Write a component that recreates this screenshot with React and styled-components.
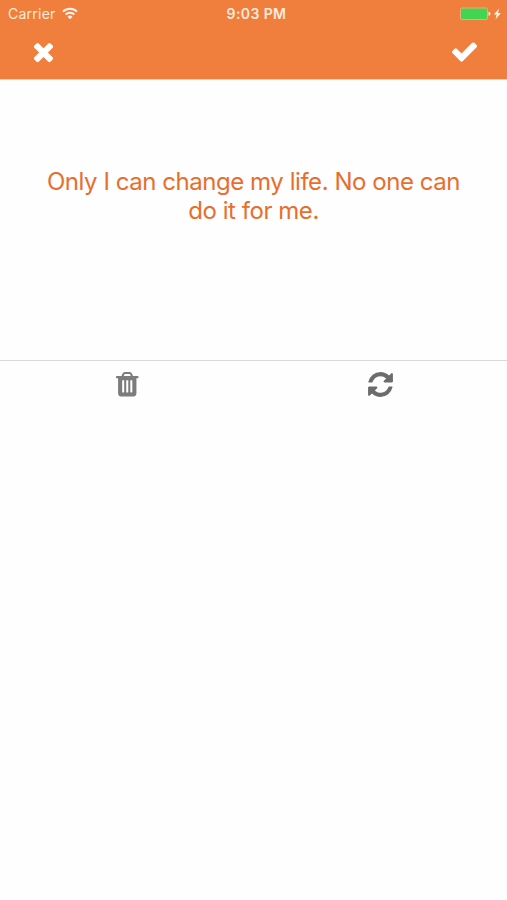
import React from 'react';
import styled, { createGlobalStyle } from 'styled-components';

const GlobalStyle = createGlobalStyle`
    body{
        margin: 0;
        background: #fefefe;
        font-family: Inter, "Liberation Sans", sans-serif;
    }
`;

const Screen = styled.div`
    width: 100%;
    min-height: 900px;
    background: #fefefe;
`;

const Header = styled.header`
    height: 80px;
    background: #f07e3c;
    color: #fff;
    border-bottom: 1px solid #f9cdb1;
    box-sizing: border-box;
`;

const StatusBar = styled.div`
    height: 28px;
    display: grid;
    grid-template-columns: 1fr auto 1fr;
    align-items: center;
    padding: 0 5px 0 8px;
    color: #ffeadb;
    font-size: 14px;
    line-height: 28px;
`;

const Carrier = styled.div`
    display: flex;
    align-items: center;
    gap: 6px;
    letter-spacing: 0.25px;
`;

const Time = styled.div`
    padding-left: 3px;
    font-size: 14px;
    font-weight: 600;
    letter-spacing: 0.4px;
`;

const Power = styled.div`
    display: flex;
    align-items: center;
    justify-content: flex-end;
`;

const NavBar = styled.nav`
    display: flex;
    justify-content: space-between;
    padding: 8.5px 28.5px 0 29px;
`;

const IconButton = styled.button`
    display: flex;
    padding: 0;
    border: 0;
    background: none;
    color: ${({ color }) => color || '#fff'};
`;

const Icon = styled.svg`
    display: block;
    width: ${({ $size }) => $size}px;
    height: ${({ $size }) => $size}px;
    fill: currentColor;
`;

const Quote = styled.div`
    height: 280px;
    display: flex;
    align-items: center;
    justify-content: center;
    box-sizing: border-box;
    padding: 0 40px 48px;
    color: #e96d2b;
    font-size: 24px;
    line-height: 29px;
    letter-spacing: -0.45px;
    text-align: center;
`;

const Actions = styled.div`
    display: grid;
    grid-template-columns: 1fr 1fr;
    justify-items: center;
    align-items: center;
    height: 47px;
    box-sizing: border-box;
    border-top: 1px solid #dadada;
`;

const icons = {
    times: 'M1490 1322q0 40-28 68l-136 136q-28 28-68 28t-68-28l-294-294-294 294q-28 28-68 28t-68-28l-136-136q-28-28-28-68t28-68l294-294-294-294q-28-28-28-68t28-68l136-136q28-28 68-28t68 28l294 294 294-294q28-28 68-28t68 28l136 136q28 28 28 68t-28 68l-294 294 294 294q28 28 28 68z',
    check: 'M1671 566q0 40-28 68l-724 724-136 136q-28 28-68 28t-68-28l-136-136-362-362q-28-28-28-68t28-68l136-136q28-28 68-28t68 28l294 295 656-657q28-28 68-28t68 28l136 136q28 28 28 68z',
    trash: 'M704 1376v-704q0-14-9-23t-23-9h-64q-14 0-23 9t-9 23v704q0 14 9 23t23 9h64q14 0 23-9t9-23zm256 0v-704q0-14-9-23t-23-9h-64q-14 0-23 9t-9 23v704q0 14 9 23t23 9h64q14 0 23-9t9-23zm256 0v-704q0-14-9-23t-23-9h-64q-14 0-23 9t-9 23v704q0 14 9 23t23 9h64q14 0 23-9t9-23zm-544-992h448l-48-117q-7-9-17-11h-317q-10 2-17 11zm928 32v64q0 14-9 23t-23 9h-96v948q0 83-47 143.500t-113 60.500h-832q-66 0-113-58.500t-47-141.500v-952h-96q-14 0-23-9t-9-23v-64q0-14 9-23t23-9h309l70-167q15-37 54-63t79-26h320q40 0 79 26t54 63l70 167h309q14 0 23 9t9 23z',
    refresh: 'M1639 1056q0 5-1 7-64 268-268 434.500t-478 166.500q-146 0-282.500-55t-243.500-157l-129 129q-19 19-45 19t-45-19-19-45v-448q0-26 19-45t45-19h448q26 0 45 19t19 45-19 45l-137 137q71 66 161 102t187 36q134 0 250-65t186-179q11-17 53-117 8-23 30-23h192q13 0 22.500 9.500t9.500 22.500zm25-800v448q0 26-19 45t-45 19h-448q-26 0-45-19t-19-45 19-45l138-138q-148-137-349-137-134 0-250 65t-186 179q-11 17-53 117-8 23-30 23h-199q-13 0-22.500-9.500t-9.500-22.500v-7q65-268 270-434.500t480-166.500q146 0 284 55.500t245 156.500l130-129q19-19 45-19t45 19 19 45z',
};

const Glyph = ({ name, size }) => (
    <Icon $size={size} viewBox="0 0 1792 1792" aria-hidden="true">
        <path d={icons[name]}/>
    </Icon>
);

const Wifi = () => (
    <svg width="16" height="14" viewBox="0 0 16 14" fill="none" stroke="#fff3e8" strokeWidth="2">
        <path d="M1 4.600a10 10 0 0 1 14 0"/>
        <path d="M3.600 7.500a6.200 6.200 0 0 1 8.800 0"/>
        <path d="M8 12.200 5.500 9.700a3.500 3.500 0 0 1 5 0z" fill="#fff3e8" stroke="none"/>
    </svg>
);

const Battery = () => (
    <svg width="43" height="14" viewBox="0 0 43 14">
        <rect x="1.500" y="1" width="27" height="11.500" rx="1.500" fill="#43d551" stroke="#e3b27c"/>
        <path d="M29.500 4.800a2 2 0 0 1 0 4z" fill="#ffeadb"/>
        <path d="M40.200 1.500 34.800 7.600h2.900L36.500 12.500l5.500-6.400h-3z" fill="#fff3e8"/>
    </svg>
);

const App = () => {
    return(
        <>
            <GlobalStyle/>
            <Screen>
                <Header>
                    <StatusBar>
                        <Carrier>
                            Carrier
                            <Wifi/>
                        </Carrier>
                        <Time>9:03 PM</Time>
                        <Power>
                            <Battery/>
                        </Power>
                    </StatusBar>
                    <NavBar>
                        <IconButton aria-label="Close"><Glyph name="times" size={29}/></IconButton>
                        <IconButton aria-label="Save"><Glyph name="check" size={29}/></IconButton>
                    </NavBar>
                </Header>
                <Quote>Only I can change my life. No one can do it for me.</Quote>
                <Actions>
                    <IconButton aria-label="Delete" color="#7c7c7c"><Glyph name="trash" size={28.5}/></IconButton>
                    <IconButton aria-label="Refresh" color="#6c6c6c"><Glyph name="refresh" size={29}/></IconButton>
                </Actions>
            </Screen>
        </>
    );
}

export default App;
